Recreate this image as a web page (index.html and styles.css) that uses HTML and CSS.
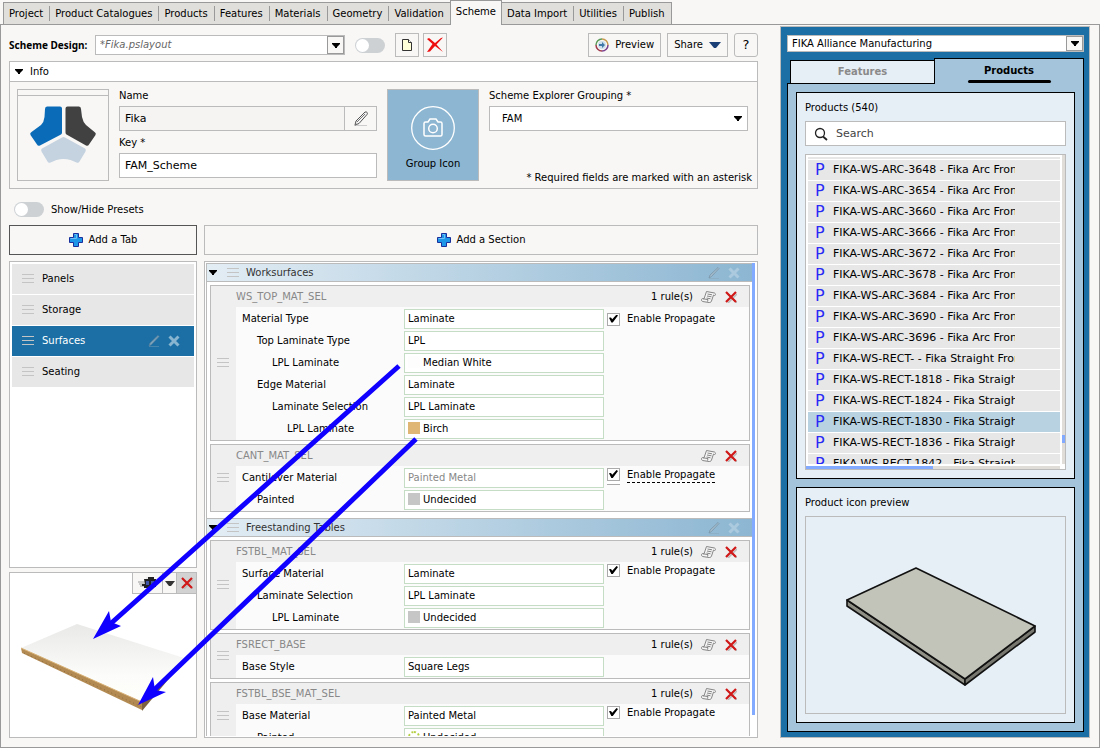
FILE: index.html
```html
<!DOCTYPE html>
<html lang="en">
<head>
    <meta charset="UTF-8">
    <meta name="viewport" content="width=device-width, initial-scale=1.0">
    <title>Scheme Design</title>
    <link rel="stylesheet" href="styles.css">
</head>
<body>

    <!-- Shared icons -->
    <svg class="icon-defs" aria-hidden="true">
        <symbol id="i-caret" viewBox="0 0 8 5"><path d="M0 0h8v1L5 4v1H3V4L0 1z"/></symbol>
        <symbol id="i-grip" viewBox="0 0 12 10"><path d="M0 .5h12M0 4.500h12M0 8.500h12" stroke="#c4c4c4" fill="none"/></symbol>
        <symbol id="i-pencil" viewBox="0 0 16 16">
            <path d="M1 14.500h13" stroke="#ccc"/>
            <path d="M2 14l1-4 9-9c2-.5 3 1 2 2.500l-8 9z" fill="#f4f4f4" stroke="#555"/>
            <path d="M4 11l8-8M2 14l2-1" stroke="#777" fill="none"/>
        </symbol>
        <symbol id="i-edit" viewBox="0 0 12 12"><path d="M1 11l1-3 8-7.500 1 1-7.500 8z" fill="#a9bcc8" stroke="#6f8797" stroke-width=".8"/><path d="M1 11.500h10" stroke="#8aa5b6" stroke-width=".6"/></symbol>
        <symbol id="i-close" viewBox="0 0 12 12"><path d="M1.500 1.500l9 9m0-9l-9 9" stroke="currentColor" stroke-width="3" fill="none"/></symbol>
        <symbol id="i-redx" viewBox="0 0 12 12"><path d="M3 3l9 9m0-9l-9 9" stroke="#bbb" stroke-width="1.500"/><path d="M1 1l10 10M11 1L1 11" stroke="#d01818" stroke-width="2.200" fill="none"/></symbol>
        <symbol id="i-plus" viewBox="0 0 14 14"><path d="M4.500 .5h5v4h4v5h-4v4h-5v-4h-4v-5h4z" fill="#1e96e8" stroke="#1b2f9c"/><path d="M5.500 1.500h2v4h-6" stroke="#6fc0f5" fill="none"/></symbol>
        <symbol id="i-rule" viewBox="0 0 15 12">
            <path d="M5.500 .5l8 1.500c1.500.5 1 3 0 2.500l-1-.5-2 6c-.5 1.500-1.500 1.500-2.500 1.500l-6.500-1c-1.500-.5-1-3 0-3l1.500.3z" fill="#f5f5f5" stroke="#858585"/>
            <path d="M6.500 3l4.500 .8M6 5l4.500 .8M5.500 7l4 .8M2 7.800l5 .8-.5 2" stroke="#858585" fill="none"/>
        </symbol>
    </svg>

    <nav class="tabs">
        <a href="#">Project</a>
        <a href="#">Product Catalogues</a>
        <a href="#">Products</a>
        <a href="#">Features</a>
        <a href="#">Materials</a>
        <a href="#">Geometry</a>
        <a href="#">Validation</a>
        <a href="#" class="active">Scheme</a>
        <a href="#">Data Import</a>
        <a href="#">Utilities</a>
        <a href="#">Publish</a>
    </nav>

    <main class="frame">
        <div class="editor">

            <!-- Toolbar -->
            <div class="toolbar">
                <label class="title" for="scheme">Scheme Design:</label>
                <div class="combo scheme-combo">
                    <select id="scheme"><option>*Fika.pslayout</option></select>
                    <span class="drop"><svg width="8" height="5"><use href="#i-caret"/></svg></span>
                </div>
                <input type="checkbox" class="toggle" aria-label="Enable scheme">
                <div class="tools">
                    <button class="tool" aria-label="New">
                        <svg width="12" height="14" viewBox="0 0 12 14"><path d="M1.500 1.500h6l3 3v8h-9z" fill="#ffffd8" stroke="#333"/><path d="M7.500 1.500v3h3" fill="#fff" stroke="#333"/></svg>
                    </button>
                    <button class="tool" aria-label="Delete">
                        <svg width="18" height="16" viewBox="0 0 18 16"><path d="M1 2l2-1 6 5 6-5 2-.5-6.500 7L17 15l-8-6-5 5.500-3 .5 5.500-8z" fill="#ee1010"/></svg>
                    </button>
                </div>
                <div class="actions">
                    <button class="tool">
                        <svg width="14" height="14" viewBox="0 0 14 14" fill="none" stroke-width="1.500"><path d="M7 1a6 6 0 0 1 6 6" stroke="#c89a50"/><path d="M13 7a6 6 0 0 1-6 6" stroke="#7a3f8c"/><path d="M7 13a6 6 0 0 1-6-6" stroke="#a03a4c"/><path d="M1 7a6 6 0 0 1 6-6" stroke="#5c9a58"/><circle cx="7" cy="7" r="4" fill="#cfe0ec" stroke="none"/><path d="M4 6h3V4l3 3-3 3V8H4z" fill="#3f77a8"/></svg>
                        Preview
                    </button>
                    <button class="tool">
                        Share
                        <svg width="12" height="6" viewBox="0 0 12 6"><path d="M0 0h12L7 6H5z" fill="#1c3f77"/></svg>
                    </button>
                    <button class="tool help">?</button>
                </div>
            </div>

            <!-- Info -->
            <section class="info">
                <h2><svg width="8" height="5"><use href="#i-caret"/></svg>Info</h2>
                <div class="info-body">
                    <div class="logo">
                        <svg width="68" height="60" viewBox="0 0 68 60">
                            <path d="M18 1.500h13q2 0 2 2v24q0 1.500-1 2L11 40.500q-2 1-3-1L1.500 30q-1-2 1-3L12 20q3-3 3.500-8L16 4q0-2.500 2-2.500z" fill="#0a6cb8"/>
                            <path d="M50 1.500H38.500q-2 0-2 2v24q0 1.500 1 2L57 40.500q2 1 3-1L66.500 30q1-2-1-3L57 20q-3-3-4-8l-1-8q0-2.500-2-2.500z" fill="#414141"/>
                            <path d="M33 32.500q1.500-.8 3 0L56 43.500q1.500 1 .5 3l-6 10q-1 2-3 1l-6-2.500q-7-2-14 0l-6 2.500q-2 1-3-1l-6-10q-1-2 .5-3z" fill="#c5d2df"/>
                        </svg>
                    </div>
                    <div class="fields">
                        <label for="name">Name</label>
                        <div class="name-row">
                            <input id="name" type="text" value="Fika" readonly>
                            <button aria-label="Edit name"><svg width="16" height="16"><use href="#i-pencil"/></svg></button>
                        </div>
                        <label for="key">Key *</label>
                        <input id="key" type="text" value="FAM_Scheme">
                    </div>
                    <button class="group-icon">
                        <svg width="44" height="44" viewBox="0 0 44 44" fill="none" stroke="#fff"><circle cx="22" cy="22" r="21.300" stroke-width="1.300"/><path d="M13 17.500q0-1.500 1.500-1.500H17l2-3h6l2 3h2.500q1.500 0 1.500 1.500v11q0 1.500-1.500 1.500h-15q-1.500 0-1.500-1.500z" stroke-width="1.500"/><circle cx="22" cy="22.500" r="4.300" stroke-width="1.500"/></svg>
                        Group Icon
                    </button>
                    <div class="fields grouping">
                        <label for="grouping">Scheme Explorer Grouping *</label>
                        <div class="group-select">
                            <select id="grouping"><option>FAM</option></select>
                            <svg width="8" height="5"><use href="#i-caret"/></svg>
                        </div>
                        <p>* Required fields are marked with an asterisk</p>
                    </div>
                </div>
            </section>

            <label class="presets"><input type="checkbox" class="toggle">Show/Hide Presets</label>

            <div class="columns">
                <div class="col-left">
                    <button class="add add-tab"><svg width="14" height="14"><use href="#i-plus"/></svg>Add a Tab</button>
                    <ul class="tab-list">
                        <li><svg width="12" height="10"><use href="#i-grip"/></svg>Panels</li>
                        <li><svg width="12" height="10"><use href="#i-grip"/></svg>Storage</li>
                        <li class="selected">
                            <svg width="12" height="10"><use href="#i-grip"/></svg>Surfaces
                            <span class="item-tools"><svg width="12" height="12"><use href="#i-edit"/></svg><svg width="12" height="12"><use href="#i-close"/></svg></span>
                        </li>
                        <li><svg width="12" height="10"><use href="#i-grip"/></svg>Seating</li>
                    </ul>
                    <div class="preview">
                        <div class="preview-tools">
                            <button aria-label="Camera"><svg width="20" height="12" viewBox="0 0 20 12"><path d="M0 5h10M1 7h9M2 9h8" stroke="#999"/><path d="M6 2h4V0h6v2h2v8h-2v1H6V9H4V7h3z" fill="#222"/><path d="M8 4h3v4H8zM13 4h3v4h-3z" fill="#4055a8"/><path d="M8 1h2M14 9h3" stroke="#ddd"/></svg></button>
                            <button class="more" aria-label="More views"><svg width="10" height="5" viewBox="0 0 10 5"><path d="M0 0h10L6 5H4z" fill="#333"/></svg></button>
                            <button class="remove" aria-label="Remove preview"><svg width="12" height="12"><use href="#i-redx"/></svg></button>
                        </div>
                        <svg class="board" viewBox="0 0 186 164">
                            <defs>
                                <linearGradient id="top" x1="0" y1="0" x2="0" y2="1"><stop offset="0" stop-color="#e9e9e8"/><stop offset=".6" stop-color="#fcfcfa"/><stop offset="1" stop-color="#fffffb"/></linearGradient>
                            </defs>
                            <path d="M11 75L67 51l107 34-43 53z" fill="url(#top)"/>
                            <path d="M11 75l121 54v8L12 80z" fill="#b28a52"/>
                            <path d="M11 75l121 54" stroke="#d9b378"/>
                            <path d="M14 80l118 54" stroke="#8d6b3c" stroke-dasharray="1 3"/>
                            <path d="M132 129l30-32v5l-30 36z" fill="#7c6240"/>
                        </svg>
                    </div>
                </div>

                <div class="col-right">
                    <button class="add"><svg width="14" height="14"><use href="#i-plus"/></svg>Add a Section</button>
                    <div class="sections">
                        <div class="section-scroll">

                            <section>
                                <header class="section-head">
                                    <svg width="8" height="5"><use href="#i-caret"/></svg><svg width="12" height="10"><use href="#i-grip"/></svg><h3>Worksurfaces</h3>
                                    <span class="item-tools"><svg width="12" height="12"><use href="#i-edit"/></svg><svg width="12" height="12"><use href="#i-close"/></svg></span>
                                </header>

                                <article class="card">
                                    <svg class="grip" width="12" height="10"><use href="#i-grip"/></svg>
                                    <header>WS_TOP_MAT_SEL<span>1 rule(s)</span><svg width="15" height="12"><use href="#i-rule"/></svg><svg width="12" height="12"><use href="#i-redx"/></svg></header>
                                    <div class="rows">
                                        <label for="a1">Material Type</label><div class="value"><input id="a1" type="text" value="Laminate"></div>
                                        <label class="in1" for="a2">Top Laminate Type</label><div class="value"><input id="a2" type="text" value="LPL"></div>
                                        <label class="in2" for="a3">LPL Laminate</label><div class="value"><i class="swatch white"></i><input id="a3" type="text" value="Median White"></div>
                                        <label class="in1" for="a4">Edge Material</label><div class="value"><input id="a4" type="text" value="Laminate"></div>
                                        <label class="in2" for="a5">Laminate Selection</label><div class="value"><input id="a5" type="text" value="LPL Laminate"></div>
                                        <label class="in3" for="a6">LPL Laminate</label><div class="value"><i class="swatch birch"></i><input id="a6" type="text" value="Birch"></div>
                                        <label class="propagate middle"><input type="checkbox" checked>Enable Propagate</label>
                                    </div>
                                </article>

                                <article class="card">
                                    <svg class="grip" width="12" height="10"><use href="#i-grip"/></svg>
                                    <header>CANT_MAT_SEL<span></span><svg width="15" height="12"><use href="#i-rule"/></svg><svg width="12" height="12"><use href="#i-redx"/></svg></header>
                                    <div class="rows">
                                        <label for="b1">Cantilever Material</label><div class="value"><input id="b1" type="text" placeholder="Painted Metal"></div>
                                        <label class="in1" for="b2">Painted</label><div class="value"><i class="swatch"></i><input id="b2" type="text" value="Undecided"></div>
                                        <label class="propagate changed"><input type="checkbox" checked><span>Enable Propagate</span></label>
                                    </div>
                                </article>
                            </section>

                            <section>
                                <header class="section-head">
                                    <svg width="8" height="5"><use href="#i-caret"/></svg><svg width="12" height="10"><use href="#i-grip"/></svg><h3>Freestanding Tables</h3>
                                    <span class="item-tools"><svg width="12" height="12"><use href="#i-edit"/></svg><svg width="12" height="12"><use href="#i-close"/></svg></span>
                                </header>

                                <article class="card">
                                    <svg class="grip" width="12" height="10"><use href="#i-grip"/></svg>
                                    <header>FSTBL_MAT_SEL<span>1 rule(s)</span><svg width="15" height="12"><use href="#i-rule"/></svg><svg width="12" height="12"><use href="#i-redx"/></svg></header>
                                    <div class="rows">
                                        <label for="c1">Surface Material</label><div class="value"><input id="c1" type="text" value="Laminate"></div>
                                        <label class="in1" for="c2">Laminate Selection</label><div class="value"><input id="c2" type="text" value="LPL Laminate"></div>
                                        <label class="in2" for="c3">LPL Laminate</label><div class="value"><i class="swatch"></i><input id="c3" type="text" value="Undecided"></div>
                                        <label class="propagate"><input type="checkbox" checked>Enable Propagate</label>
                                    </div>
                                </article>

                                <article class="card">
                                    <svg class="grip" width="12" height="10"><use href="#i-grip"/></svg>
                                    <header>FSRECT_BASE<span>1 rule(s)</span><svg width="15" height="12"><use href="#i-rule"/></svg><svg width="12" height="12"><use href="#i-redx"/></svg></header>
                                    <div class="rows">
                                        <label for="d1">Base Style</label><div class="value"><input id="d1" type="text" value="Square Legs"></div>
                                    </div>
                                </article>

                                <article class="card">
                                    <svg class="grip" width="12" height="10"><use href="#i-grip"/></svg>
                                    <header>FSTBL_BSE_MAT_SEL<span>1 rule(s)</span><svg width="15" height="12"><use href="#i-rule"/></svg><svg width="12" height="12"><use href="#i-redx"/></svg></header>
                                    <div class="rows">
                                        <label for="e1">Base Material</label><div class="value"><input id="e1" type="text" value="Painted Metal"></div>
                                        <label class="in1" for="e2">Painted</label><div class="value"><i class="swatch none"></i><input id="e2" type="text" value="Undecided"></div>
                                        <label class="propagate"><input type="checkbox" checked>Enable Propagate</label>
                                    </div>
                                </article>
                            </section>
                        </div>
                        <div class="section-bar"></div>
                    </div>
                </div>
            </div>
        </div>

        <!-- Catalogue side panel -->
        <aside class="catalogue">
            <div class="combo">
                <select aria-label="Catalogue"><option>FIKA Alliance Manufacturing</option></select>
                <span class="drop"><svg width="8" height="5"><use href="#i-caret"/></svg></span>
            </div>
            <div class="cat-tabs">
                <button>Features</button>
                <button class="active">Products</button>
            </div>
            <div class="cat-body">
                <section class="box products">
                    <h3>Products (540)</h3>
                    <div class="search">
                        <svg width="14" height="14" viewBox="0 0 14 14" fill="none" stroke="#222"><circle cx="6" cy="6" r="4.500" stroke-width="1.300"/><path d="M9 9.500l4 3.500" stroke-width="1.800"/></svg>
                        <input type="search" placeholder="Search" aria-label="Search">
                    </div>
                    <div class="list">
                        <ul>
                            <li><b>P</b><span>FIKA-WS-ARC-3648 - Fika Arc Front</span></li>
                            <li><b>P</b><span>FIKA-WS-ARC-3654 - Fika Arc Front</span></li>
                            <li><b>P</b><span>FIKA-WS-ARC-3660 - Fika Arc Front</span></li>
                            <li><b>P</b><span>FIKA-WS-ARC-3666 - Fika Arc Front</span></li>
                            <li><b>P</b><span>FIKA-WS-ARC-3672 - Fika Arc Front</span></li>
                            <li><b>P</b><span>FIKA-WS-ARC-3678 - Fika Arc Front</span></li>
                            <li><b>P</b><span>FIKA-WS-ARC-3684 - Fika Arc Front</span></li>
                            <li><b>P</b><span>FIKA-WS-ARC-3690 - Fika Arc Front</span></li>
                            <li><b>P</b><span>FIKA-WS-ARC-3696 - Fika Arc Front</span></li>
                            <li><b>P</b><span>FIKA-WS-RECT- - Fika Straight Front</span></li>
                            <li><b>P</b><span>FIKA-WS-RECT-1818 - Fika Straight</span></li>
                            <li><b>P</b><span>FIKA-WS-RECT-1824 - Fika Straight</span></li>
                            <li class="selected"><b>P</b><span>FIKA-WS-RECT-1830 - Fika Straight</span></li>
                            <li><b>P</b><span>FIKA-WS-RECT-1836 - Fika Straight</span></li>
                            <li><b>P</b><span>FIKA-WS-RECT-1842 - Fika Straight</span></li>
                        </ul>
                        <div class="vbar"></div>
                        <div class="hbar"></div>
                    </div>
                </section>
                <section class="box icon-preview">
                    <h3>Product icon preview</h3>
                    <div class="canvas">
                        <svg width="192" height="122" viewBox="0 0 192 122" stroke="#111" stroke-width="1.600" stroke-linejoin="round">
                            <path d="M2 34l118 79v6L2 40z" fill="#8f8f86"/>
                            <path d="M120 113l70-53v6l-70 53z" fill="#77776f"/>
                            <path d="M2 34L71 2l119 58-70 53z" fill="#c2c3b9"/>
                        </svg>
                    </div>
                </section>
            </div>
        </aside>
    </main>

    <!-- Callout arrows -->
    <svg class="arrows" width="1100" height="748" viewBox="0 0 1100 748">
        <path d="M399 366L108 626M416 439L153 691" stroke="#1000ff" stroke-width="5"/>
        <path d="M93 639l16-28 2 11 10 4z" fill="#1000ff"/>
        <path d="M138 705l15-28 2 13 11 2z" fill="#1000ff"/>
    </svg>

</body>
</html>
```
FILE: styles.css
```css
* {
    box-sizing: border-box;
}

body {
    margin: 0;
    height: 100vh;
    display: flex;
    flex-direction: column;
    overflow: hidden;
    position: relative;
    background-color: #f8f7f6;
    color: #000;
    font-family: "DejaVu Sans", Verdana, sans-serif;
    font-size: 10px;
    line-height: 14px;
}

button, input, select {
    font: inherit;
    color: inherit;
    margin: 0;
    padding: 0;
    border: 0;
    border-radius: 0;
    background: none;
    min-width: 0;
}

select {
    appearance: none;
}

h2, h3, p, ul {
    margin: 0;
    padding: 0;
    font-size: 10px;
    font-weight: normal;
    list-style: none;
}

svg {
    display: block;
    flex: none;
}

.icon-defs {
    position: absolute;
    width: 0;
    height: 0;
}

/* Main tabs */
.tabs {
    display: flex;
    align-items: flex-end;
    height: 25px;
    padding-left: 3px;
    margin-bottom: -1px;
    z-index: 1;
}

.tabs a {
    position: relative;
    height: 23px;
    padding: 4px 6px;
    background-color: #e0dfdb;
    border: solid #999;
    border-width: 1px 0;
    color: #000;
    text-decoration: none;
}

.tabs a:first-child {
    padding-left: 5px;
    border-left-width: 1px;
}

.tabs a:last-child {
    border-right-width: 1px;
}

/* short divider between neighbouring tabs */
.tabs a + a::before {
    content: "";
    position: absolute;
    left: 0;
    top: 3px;
    height: 15px;
    border-left: 1px solid #999;
}

.tabs a.active {
    height: 25px;
    padding: 4px 5px;
    background-color: #f8f7f6;
    border-width: 1px 1px 0;
}

.tabs a.active + a {
    padding-left: 5px;
}

.tabs a.active::before,
.tabs a.active + a::before {
    display: none;
}

.frame {
    flex: 1;
    min-height: 0;
    display: flex;
    gap: 20px;
    padding: 1px 9px 9px 8px;
    border: 1px solid #999;
}

.editor {
    flex: 1;
    min-width: 0;
    display: flex;
    flex-direction: column;
}

/* Toolbar */
.toolbar {
    display: flex;
    align-items: center;
    gap: 10px;
    padding: 7px 0 4px;
}

.title {
    width: 76px;
    font-family: "Noto Sans", sans-serif;
    font-weight: bold;
    white-space: nowrap;
}

.combo {
    display: flex;
    background-color: #fff;
    border: 1px solid #bbb;
}

.combo select {
    flex: 1;
    padding-left: 4px;
}

.scheme-combo {
    width: 250px;
    height: 20px;
    font-style: italic;
    color: #666;
}

.drop {
    width: 17px;
    display: flex;
    align-items: center;
    justify-content: center;
    background-color: #f8f7f6;
    border: 1px solid #999;
    color: #000;
}

.toggle {
    appearance: none;
    width: 30px;
    height: 15px;
    border-radius: 8px;
    background-color: #cdd1d4;
}

.toggle::before {
    content: "";
    display: block;
    width: 13px;
    height: 13px;
    margin: 1px;
    border-radius: 50%;
    background-color: #fff;
}

.tools, .actions {
    display: flex;
    gap: 4px;
}

.actions {
    flex: 1;
    justify-content: flex-end;
    gap: 6px;
}

.tool {
    display: flex;
    align-items: center;
    justify-content: center;
    gap: 6px;
    min-width: 24px;
    height: 24px;
    padding: 0 6px;
    border: 1px solid #bbb;
}

.tools .tool {
    padding: 0;
}

.help {
    font-size: 13px;
    border-radius: 3px;
}

/* Info */
.info {
    border: 1px solid #bbb;
}

.info h2 {
    display: flex;
    align-items: center;
    gap: 7px;
    height: 20px;
    padding-left: 5px;
    background-color: #fff;
    border-bottom: 1px solid #bbb;
}

.info-body {
    display: flex;
    gap: 10px;
    padding: 7px 5px 7px 7px;
}

.logo {
    width: 92px;
    height: 92px;
    display: flex;
    flex-direction: column;
    align-items: center;
    border: 1px solid #bbb;
}

.logo::before {
    content: "";
    width: 100%;
    height: 5px;
    margin-bottom: 9px;
    border-bottom: 1px solid #bbb;
}

.fields {
    width: 258px;
    display: flex;
    flex-direction: column;
}

.fields label {
    height: 17px;
}

.fields input {
    height: 25px;
    padding-left: 5px;
    border: 1px solid #bbb;
    background-color: #fff;
    font-size: 11px;
}

.fields .name-row {
    display: flex;
    margin-bottom: 5px;
}

.name-row input {
    flex: 1;
    background-color: #f5f4f3;
}

.name-row button {
    width: 32px;
    padding-left: 8px;
    border: 1px solid #bbb;
    border-left: 0;
}

.group-icon {
    width: 92px;
    height: 92px;
    display: flex;
    flex-direction: column;
    align-items: center;
    justify-content: center;
    gap: 7px;
    padding-top: 6px;
    border: 1px solid #bbb;
    background-color: #8cb6d2;
}

.grouping {
    flex: 1;
}

.group-select {
    display: flex;
    align-items: center;
    height: 25px;
    margin-right: 4px;
    padding: 0 5px 0 12px;
    border: 1px solid #bbb;
    background-color: #fff;
}

.group-select select {
    flex: 1;
}

.grouping p {
    margin-top: auto;
    margin-bottom: -4px;
    text-align: right;
}

.presets {
    display: flex;
    align-items: center;
    gap: 7px;
    padding: 13px 0 8px 5px;
}

/* Tab list and sections */
.columns {
    flex: 1;
    min-height: 0;
    display: flex;
    gap: 7px;
}

.col-left, .col-right {
    display: flex;
    flex-direction: column;
    gap: 6px;
    min-height: 0;
}

.col-left {
    width: 188px;
}

.col-right {
    flex: 1;
    min-width: 0;
}

.add {
    display: flex;
    align-items: center;
    justify-content: center;
    gap: 6px;
    flex: none;
    height: 30px;
    border: 1px solid #bbb;
}

.add-tab {
    border-color: #555;
}

.tab-list {
    flex: 1;
    padding: 2px;
    border: 1px solid #bbb;
    background-color: #fff;
}

.tab-list li {
    display: flex;
    align-items: center;
    gap: 8px;
    height: 30px;
    margin-bottom: 1px;
    padding: 0 14px 0 10px;
    background-color: #e7e7e7;
}

.tab-list .selected {
    background-color: #1b6fa5;
    color: #fff;
}

.item-tools {
    display: flex;
    gap: 8px;
    margin-left: auto;
    color: #b9d3e4;
    opacity: 0.7;
}

.preview {
    position: relative;
    height: 166px;
    margin-top: -2px;
    border: 1px solid #bbb;
    background-color: #fff;
}

.board {
    width: 100%;
    height: 100%;
}

.preview-tools {
    position: absolute;
    top: 0;
    right: 0;
    display: flex;
    background-color: #f8f7f6;
    border: solid #bbb;
    border-width: 0 0 1px 1px;
}

.preview-tools button {
    display: flex;
    align-items: center;
    justify-content: center;
    width: 29px;
    height: 20px;
}

.preview-tools .more {
    width: 15px;
    border: solid #bbb;
    border-width: 0 1px;
}

.preview-tools .remove {
    width: 19px;
    background-color: #d2d2d2;
}

.sections {
    flex: 1;
    min-height: 0;
    display: flex;
    padding: 1px;
    border: 1px solid #bbb;
    background-color: #fff;
}

.section-scroll {
    flex: 1;
    min-width: 0;
    overflow: hidden;
    border-left: 1px solid #bbb;
}

.section-scroll section {
    padding-bottom: 3px;
}

.section-bar {
    width: 3px;
    height: 452px;
    margin-right: 1px;
    background-color: #82aaff;
}

.section-head {
    display: flex;
    align-items: center;
    height: 19px;
    margin-bottom: 3px;
    padding: 0 12px 0 2px;
    border-top: 1px solid #bbb;
    border-bottom: 1px solid #bbb;
    background: linear-gradient(to right, #e3edf4, #8cb6d2);
    color: #333;
}

.section-head > svg:nth-child(2) {
    margin: 0 7px 0 10px;
}

.card {
    position: relative;
    margin: 0 2px 3px 3px;
    padding-left: 25px;
    border: 1px solid #bbb;
    background-color: #efefef;
}

.card .grip {
    position: absolute;
    left: 6px;
    top: 50%;
    margin-top: -5px;
}

.card header {
    display: flex;
    align-items: center;
    height: 21px;
    padding-right: 12px;
    color: #888;
}

.card header span {
    margin-left: auto;
    margin-right: 8px;
    color: #000;
}

.card header svg + svg {
    margin-left: 9px;
}

.rows {
    display: grid;
    grid-template-columns: 162px 200px 1fr;
    grid-auto-rows: 20px;
    column-gap: 3px;
    row-gap: 2px;
    padding: 2px 0 1px 3px;
    background-color: #fbfbfb;
}

.rows label {
    grid-column: 1;
    display: flex;
    align-items: center;
    padding-left: 3px;
}

.rows .in1 { padding-left: 18px; }
.rows .in2 { padding-left: 33px; }
.rows .in3 { padding-left: 48px; }

.value {
    grid-column: 2;
    display: flex;
    gap: 3px;
    padding: 0 3px;
    border: 1px solid #c5dcc5;
    background-color: #fff;
}

.value input {
    flex: 1;
}

.value input::placeholder {
    color: #888;
    opacity: 1;
}

.swatch {
    width: 12px;
    height: 12px;
    margin-top: 2px;
    background-color: #c6c6c6;
}

.swatch.white { background-color: #fdfdfd; }
.swatch.birch { background-color: #dfb674; }

.swatch.none {
    border: 2px dotted #b5cf45;
    border-radius: 50%;
    background-color: #fff;
}

.rows .propagate {
    grid-column: 3;
    grid-row: 1;
    align-items: flex-start;
    gap: 7px;
    padding-left: 0;
}

.rows .middle {
    align-items: center;
}

.propagate input {
    appearance: none;
    width: 13px;
    height: 13px;
    border: 1px solid #aaa;
    background-color: #fff;
}

.propagate input::before {
    content: "";
    display: block;
    width: 9px;
    height: 8px;
    margin: 1px;
    background-color: #000;
    clip-path: polygon(0 40%, 22% 36%, 36% 60%, 84% 0, 100% 12%, 42% 100%, 26% 100%);
}

.propagate.changed input {
    box-shadow: 0 3px 0 #fff, 0 4px 0 #aaa;
}

.propagate.changed span {
    border-bottom: 1px dashed #000;
}

/* Catalogue */
.catalogue {
    width: 310px;
    display: flex;
    flex-direction: column;
    margin-left: 2px;
    padding: 8px 5px 5px 6px;
    border: 1px solid #bbb;
    background-color: #1b6fa5;
}

.catalogue .combo {
    height: 17px;
}

.cat-tabs {
    display: flex;
    align-items: flex-end;
    margin: 6px 0 -1px 3px;
    z-index: 1;
}

.cat-tabs button {
    width: 145px;
    height: 24px;
    border: 1px solid #000;
    background-color: #e7eff6;
    color: #8a8a8a;
    font-weight: bold;
}

.cat-tabs .active {
    flex: 1;
    height: 26px;
    margin-left: -1px;
    padding-top: 3px;
    border-bottom: 0;
    background-color: #a3c4da;
    color: #000;
}

.cat-tabs .active::after {
    content: "";
    display: block;
    width: 83px;
    height: 3px;
    margin: 2px auto 0;
    border-radius: 2px;
    background-color: #000;
}

.cat-body {
    flex: 1;
    min-height: 0;
    display: flex;
    flex-direction: column;
    gap: 8px;
    padding: 8px;
    border: 1px solid #000;
    background-color: #a3c4da;
}

.box {
    display: flex;
    flex-direction: column;
    gap: 6px;
    padding: 8px;
    border: 1px solid #000;
    background-color: #e7eff6;
}

.products {
    flex: 1;
    min-height: 0;
}

.search {
    display: flex;
    align-items: center;
    gap: 8px;
    flex: none;
    height: 25px;
    padding: 0 8px;
    border: 1px solid #bbb;
    background-color: #fff;
    font-size: 11px;
}

.search input {
    flex: 1;
    appearance: none;
}

.search input::placeholder {
    color: #444;
    opacity: 1;
}

.list {
    flex: 1;
    min-height: 0;
    display: grid;
    grid-template: 1fr 3px / 1fr 3px;
    gap: 2px;
    margin-top: 2px;
    border: 1px solid #bbb;
    background-color: #fff;
}

.list ul {
    min-width: 0;
    min-height: 0;
    overflow: hidden;
    margin: 2px 0 0 2px;
    border-top: 2px solid #e7e7e7;
}

.list li {
    display: flex;
    align-items: center;
    gap: 8px;
    height: 20px;
    margin-top: 1px;
    padding: 0 45px 0 7px;
    background-color: #e7e7e7;
    font-size: 11px;
}

.list .selected {
    background-color: #b9d2e2;
}

.list b {
    width: 10px;
    color: #2a2af5;
    font-size: 16px;
    font-weight: normal;
}

.list span {
    flex: 1;
    overflow: hidden;
    white-space: nowrap;
}

.vbar {
    background: linear-gradient(#82aaff, #82aaff) 0 93% / 3px 8px no-repeat #e0ddd8;
}

.hbar {
    background: linear-gradient(#82aaff, #82aaff) 0 0 / 50% 3px no-repeat #e0ddd8;
}

.icon-preview {
    height: 236px;
}

.canvas {
    flex: 1;
    display: flex;
    align-items: center;
    justify-content: center;
    padding: 24px 0 0 10px;
    border: 1px solid #bbb;
}

.arrows {
    position: absolute;
    left: 0;
    top: 0;
    z-index: 2;
    fill: none;
    pointer-events: none;
}
```
